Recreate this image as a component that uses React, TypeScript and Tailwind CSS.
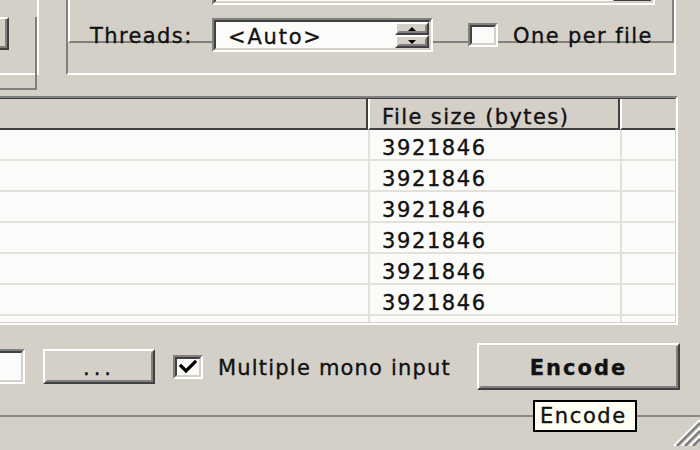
import React from "react";

function Sunken({ className = "", inner = "", children }: { className?: string; inner?: string; children?: React.ReactNode }) {
  return (
    <div className={`shrink-0 border-2 border-t-[#808080] border-l-[#808080] border-b-white border-r-white ${className}`}>
      <div className={`h-full w-full border-2 border-t-[#404040] border-l-[#404040] border-b-[#d4d0c8] border-r-[#d4d0c8] bg-[#fbfbf9] ${inner}`}>
        {children}
      </div>
    </div>
  );
}

function Raised({ className = "", inner = "", children }: { className?: string; inner?: string; children?: React.ReactNode }) {
  return (
    <div className={`shrink-0 border-2 border-t-white border-l-white border-b-[#404040] border-r-[#404040] bg-[#d4d0c8] ${className}`}>
      <div className={`h-full w-full border-2 border-t-[#d4d0c8] border-l-[#d4d0c8] border-b-[#808080] border-r-[#808080] ${inner}`}>
        {children}
      </div>
    </div>
  );
}

function Check() {
  return (
    <svg width="20" height="16" viewBox="0 0 20 16" className="mx-auto">
      <path d="M3 7 L8 12 L17 3" fill="none" stroke="#000" strokeWidth="3.2" strokeLinecap="square" />
    </svg>
  );
}

const rows = [0, 1, 2, 3, 4, 5];

export default function App() {
  return (
    <div className="relative w-[700px] h-[450px] overflow-hidden bg-[#d4d0c8] text-[#111] font-['DejaVu_Sans',sans-serif] text-[21px] tracking-[1.4px] leading-[24px] [-webkit-text-stroke:0.35px_#111]">
      {/* Top row */}
      <div className="flex h-[75px]">
        <div className="w-[39px] h-[75px] shrink-0 border-r-2 border-b-2 border-r-white border-b-white">
          <div className="h-full w-full border-r-2 border-b-2 border-r-[#808080] border-b-[#808080]">
            <div className="mt-[17px] ml-[-4px] w-[13px] h-[33px] border-t-2 border-t-white border-r-2 border-b-2 border-r-[#404040] border-b-[#404040]">
              <div className="h-full w-full border-r-2 border-b-2 border-r-[#808080] border-b-[#808080]" />
            </div>
          </div>
        </div>
        <div className="ml-[27px] w-[610px] h-[75px] shrink-0 border-l-2 border-l-[#808080] border-r-2 border-r-white border-b-2 border-b-white">
          <div className="h-full w-full border-l-2 border-l-white border-r-2 border-r-[#808080] border-b-2 border-b-[#808080]">
            <Sunken className="ml-[142px] mt-[-30px] w-[443px] h-[35px]" inner="flex justify-end">
              <Raised className="w-[38px] h-full" />
            </Sunken>
            <div className="mt-[13px] h-[34px] flex items-center">
              <div className="ml-[20px] w-[122px] shrink-0 pt-[2px]">Threads:</div>
              <Sunken className="w-[221px] h-[34px]" inner="flex">
                <div className="flex-1 pl-[12px] pt-[3px] tracking-[1.8px]">&lt;Auto&gt;</div>
                <div className="w-[34px] flex flex-col">
                  <Raised className="h-[13px] w-full" inner="flex items-center justify-center">
                    <svg width="8" height="4" viewBox="0 0 8 4"><polygon points="4,0 8,4 0,4" fill="#000" /></svg>
                  </Raised>
                  <Raised className="h-[13px] w-full" inner="flex items-center justify-center">
                    <svg width="8" height="4" viewBox="0 0 8 4"><polygon points="0,0 8,0 4,4" fill="#000" /></svg>
                  </Raised>
                </div>
              </Sunken>
              <Sunken className="ml-[35px] w-[30px] h-[24px]" />
              <div className="ml-[15px] pt-[2px] whitespace-nowrap">One per file</div>
            </div>
          </div>
        </div>
      </div>

      {/* List view */}
      <div className="mt-[21px] ml-[-4px] w-[682px] h-[229px] border-t-2 border-t-[#808080] border-r-2 border-r-white border-b-2 border-b-white">
        <div className="h-full w-full flex flex-col border-t border-t-[#404040] border-r border-r-[#d4d0c8] border-b border-b-[#d4d0c8] bg-[#fbfbf9]">
          <div className="flex h-[31px] shrink-0 bg-[#d4d0c8]">
            <div className="w-[372px] shrink-0 border-r-2 border-r-[#404040] border-b-2 border-b-[#404040]" />
            <div className="w-[252px] shrink-0 border-l-2 border-l-white border-r-2 border-r-[#404040] border-b-2 border-b-[#404040] pl-[12px] pt-[8px] leading-[20px] whitespace-nowrap">
              File size (bytes)
            </div>
            <div className="flex-1 border-l-2 border-l-white border-b-2 border-b-[#404040]" />
          </div>
          {rows.map((r) => (
            <div key={r} className="flex h-[31px] shrink-0 border-b-2 border-b-[#e4e1da]">
              <div className="w-[374px] shrink-0 border-r-2 border-r-[#e4e1da]" />
              <div className="w-[252px] shrink-0 border-r-2 border-r-[#e4e1da] pl-[12px] pt-[8px] leading-[20px] tracking-[1.6px]">3921846</div>
              <div className="flex-1" />
            </div>
          ))}
          <div className="flex flex-1">
            <div className="w-[374px] shrink-0 border-r-2 border-r-[#e4e1da]" />
            <div className="w-[252px] shrink-0 border-r-2 border-r-[#e4e1da]" />
          </div>
        </div>
      </div>

      {/* Bottom controls */}
      <div className="mt-[18px] h-[47px] flex items-center">
        <Sunken className="ml-[-6px] w-[31px] h-[35px]" />
        <Raised className="ml-[18px] w-[112px] h-[35px]" inner="flex items-center justify-center">
          <span className="pt-[2px] tracking-[4px]">...</span>
        </Raised>
        <Sunken className="ml-[18px] w-[30px] h-[24px]" inner="flex items-center">
          <Check />
        </Sunken>
        <div className="ml-[15px] pt-[2px] whitespace-nowrap tracking-[1.2px]">Multiple mono input</div>
        <Raised className="ml-auto mr-[20px] w-[203px] h-[47px]" inner="flex items-center justify-center">
          <span className="font-bold tracking-[2px] pt-[2px]">Encode</span>
        </Raised>
      </div>

      {/* Status bar */}
      <div className="mt-[25px] h-[35px] border-t-2 border-t-[#8a8782] flex justify-end items-end">
        <svg width="30" height="26" viewBox="0 0 30 26" className="mb-[4px]">
          <line x1="4" y1="26" x2="30" y2="0" stroke="#fff" strokeWidth="2" />
          <line x1="7" y1="26" x2="30" y2="3" stroke="#808080" strokeWidth="2.5" />
          <line x1="12" y1="26" x2="30" y2="8" stroke="#fff" strokeWidth="2" />
          <line x1="15" y1="26" x2="30" y2="11" stroke="#808080" strokeWidth="2.5" />
          <line x1="20" y1="26" x2="30" y2="16" stroke="#fff" strokeWidth="2" />
          <line x1="23" y1="26" x2="30" y2="19" stroke="#808080" strokeWidth="2.5" />
        </svg>
      </div>

      {/* Tooltip */}
      <div className="absolute left-[533px] top-[400px] w-[104px] h-[32px] border-2 border-black bg-[#fdfdf2] pl-[5px] pt-[2px] tracking-[1.6px] leading-[24px]">
        Encode
      </div>
    </div>
  );
}
